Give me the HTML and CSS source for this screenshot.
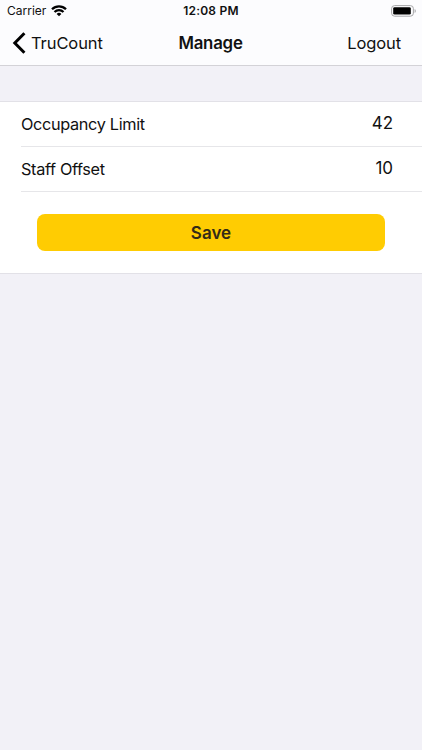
FILE: index.html
```
<!DOCTYPE html>
<html lang="en">
<head>
<meta charset="utf-8">
<title>Manage</title>
<link rel="stylesheet" href="styles.css">
</head>
<body>
<header class="header">
  <div class="status">
    <div class="carrier"><span>Carrier</span>
      <svg class="wifi" viewBox="0 0 16 12"><g fill="none" stroke="#000" stroke-width="2.3"><path d="M1 4.3a10 10 0 0 1 14 0"/><path d="M3.5 7a6.4 6.4 0 0 1 9 0"/></g><path d="M5.6 8.9a3.5 3.5 0 0 1 4.8 0L8 11.3z"/></svg>
    </div>
    <div class="time">12:08 PM</div>
    <svg class="battery" viewBox="0 0 26 12"><rect x=".6" y=".6" width="21.8" height="10.6" rx="3" fill="none" stroke="#a6a6a8"/><rect x="2.2" y="2.2" width="17.6" height="7.4" rx="1.4"/><path d="M23.6 4v4c1.6-.6 1.6-3.4 0-4" fill="#a6a6a8"/></svg>
  </div>
  <nav class="nav">
    <a class="back"><svg class="chevron" viewBox="0 0 14 22"><path d="M12.4 1.2 2.8 11l9.6 9.8" fill="none" stroke="#000" stroke-width="3"/></svg><span>TruCount</span></a>
    <h1 class="title">Manage</h1>
    <a class="logout">Logout</a>
  </nav>
</header>
<main class="form">
  <div class="row"><span class="label">Occupancy Limit</span><span class="value">42</span></div>
  <div class="row"><span class="label">Staff Offset</span><span class="value">10</span></div>
  <div class="action"><button class="save">Save</button></div>
</main>
</body>
</html>
```
FILE: styles.css
```
* { box-sizing: border-box; }
body { margin: 0; min-height: 750px; background: #f2f1f7; color: #111; font-family: Inter, sans-serif; font-size: 16.5px; letter-spacing: -.1px; }
.header { height: 66px; background: #fcfcfe; border-bottom: 1px solid #d3d2d7; }
.status { display: grid; grid-template-columns: 1fr auto 1fr; height: 21px; align-items: center; padding: 0 5px 0 7px; font-size: 12px; letter-spacing: 0; }
.carrier { display: flex; align-items: center; gap: 5px; }
.wifi { width: 16px; height: 12px; }
.time { margin: 0 1px 0 -1px; font-weight: 600; letter-spacing: .2px; }
.battery { width: 26px; height: 12px; justify-self: end; }
.nav { display: grid; grid-template-columns: 1fr auto 1fr; height: 43px; align-items: center; padding: 0 21px 0 12px; }
.back { display: flex; align-items: center; gap: 5px; }
.chevron { width: 14px; height: 22px; }
.title { margin: 0 -4px 0 4px; font-size: 16.8px; font-weight: 600; letter-spacing: -.2px; }
.logout { justify-self: end; }
.form { margin-top: 35px; height: 173px; background: #fff; border: solid #e2e1e7; border-width: 1px 0; }
.row { display: flex; align-items: center; justify-content: space-between; height: 45px; margin-left: 21px; padding: 0 29px 1px 0; border-bottom: 1px solid #e6e6e9; }
.label { font-size: 16.3px; letter-spacing: -.35px; }
.value { padding-bottom: 1px; font-size: 17px; letter-spacing: -.1px; }
.action { padding: 22px 37px; }
.save { display: block; width: 100%; height: 37px; padding: 0; border: 0; border-radius: 8px; background: #ffcc02; color: #332b17; font: 600 17px Inter, sans-serif; }
```
